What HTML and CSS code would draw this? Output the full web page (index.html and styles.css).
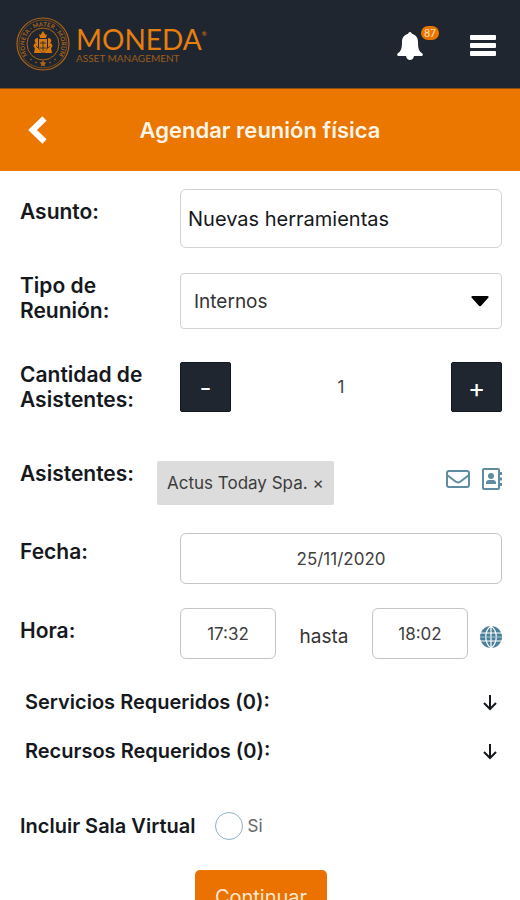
FILE: index.html
```html
<!DOCTYPE html>
<html lang="es">
<head>
<meta charset="utf-8">
<meta name="viewport" content="width=device-width, initial-scale=1">
<title>Agendar reunión física</title>
<link rel="stylesheet" href="styles.css">
</head>
<body>
<header class="topbar">
  <a class="brand" href="#">
    <svg class="seal" viewBox="0 0 54 54" aria-hidden="true">
      <defs><path id="ring" d="M13.500 40.500A18.500 18.500 0 1 1 40.500 40.500"/></defs>
      <g fill="none" stroke="currentColor">
        <circle cx="27" cy="27" r="26" stroke-width="1.200"/>
        <circle cx="27" cy="27" r="24" stroke-width=".6"/>
        <circle cx="27" cy="27" r="16" stroke-width="1"/>
      </g>
      <text class="seal-text"><textPath href="#ring" startOffset="50%">MONETA · MATER · MORUM</textPath></text>
      <g fill="currentColor">
        <path d="M27 43l1 2.200 2.400.3-1.700 1.700.4 2.400-2.100-1.200-2.100 1.200.4-2.400-1.700-1.700 2.400-.3z"/>
        <circle cx="20" cy="45.500" r=".8"/><circle cx="34" cy="45.500" r=".8"/>
        <circle cx="15" cy="42.500" r=".8"/><circle cx="39" cy="42.500" r=".8"/>
      </g>
      <g fill="#d9770f">
        <path d="M23 17l1.500 1L27 14l2.500 4 1.500-1-1 4h-6zM23 22h8v7c0 4-2 6-4 7-2-1-4-3-4-7z"/>
        <path d="M22 21c-4 0-4 4-2 5-3 1-3 4-1 5l-1 5h8l-4-5zM32 21c4 0 4 4 2 5 3 1 3 4 1 5l1 5h-8l4-5z"/>
      </g>
      <path d="M24 26h6M27 24v10M20 29l2 2M34 29l-2 2M24 31h6" stroke="#20262f" stroke-width=".8"/>
    </svg>
    <span class="wordmark"><span class="name">MONEDA<sup>®</sup></span><span class="tagline">ASSET MANAGEMENT</span></span>
  </a>
  <div class="tools">
    <button class="plain bell" type="button" aria-label="Notificaciones">
      <svg width="28" height="30" viewBox="0 0 28 30" aria-hidden="true"><path fill="#fff" d="M14 1c1 0 1.600.7 1.800 1.800C20 3.800 22 7 22 11c0 7 1 9 4.300 11.500.9.700.7 2-.5 2.500H18c-.4 2.400-2 4-4 4s-3.600-1.600-4-4H2.200C1 24.500.8 23.200 1.700 22.500 5 20 6 18 6 11c0-4 2-7.200 6.200-8.200C12.400 1.700 13 1 14 1z"/></svg>
      <span class="count">87</span>
    </button>
    <button class="plain" type="button" aria-label="Menú">
      <svg width="26" height="22" viewBox="0 0 26 22" aria-hidden="true"><g fill="#fff"><rect x="0" y="0" width="26" height="5" rx="1"/><rect x="0" y="8" width="26" height="5" rx="1"/><rect x="0" y="16" width="26" height="5" rx="1"/></g></svg>
    </button>
  </div>
</header>
<div class="titlebar">
  <button class="plain" type="button" aria-label="Volver">
    <svg width="20" height="28" viewBox="0 0 20 28" aria-hidden="true"><path d="M17.500 2.500L5.500 14l12 11.500" fill="none" stroke="#fff" stroke-width="6"/></svg>
  </button>
  <h1>Agendar reunión física</h1>
</div>
<form class="form">
  <div class="row subject">
    <label for="asunto">Asunto:</label>
    <input class="box" id="asunto" type="text" value="Nuevas herramientas">
  </div>
  <div class="row type">
    <label for="tipo">Tipo de Reunión:</label>
    <div class="select">
      <select class="box" id="tipo"><option>Internos</option></select>
      <svg width="18" height="11" viewBox="0 0 18 11" aria-hidden="true"><path d="M1.500 0h15c1 0 1.500 1 .8 1.800l-7 7.700c-.8.900-1.800.9-2.600 0l-7-7.700C0 1 .5 0 1.500 0z"/></svg>
    </div>
  </div>
  <div class="row amount">
    <label for="cantidad">Cantidad de Asistentes:</label>
    <div class="stepper">
      <button type="button" aria-label="Menos">-</button>
      <input id="cantidad" type="text" inputmode="numeric" value="1">
      <button type="button" aria-label="Más">+</button>
    </div>
  </div>
  <div class="row people">
    <span class="label">Asistentes:</span>
    <button class="chip" type="button">Actus Today Spa. ×</button>
    <div class="people-tools">
      <button class="plain" type="button" aria-label="Invitar por correo">
        <svg width="24" height="20" viewBox="0 0 24 20" fill="none" stroke="currentColor" stroke-width="2" aria-hidden="true"><rect x="1" y="2" width="22" height="16" rx="2"/><path d="M1 6l8.500 6.500q2.500 1.800 5 0L23 6"/></svg>
      </button>
      <button class="plain" type="button" aria-label="Contactos">
        <svg width="20" height="24" viewBox="0 0 20 24" aria-hidden="true"><rect x="1" y="2" width="16" height="20" rx="1" fill="none" stroke="currentColor" stroke-width="2"/><g fill="currentColor"><circle cx="9" cy="9" r="3"/><path d="M4 17v-1c0-2 1-3 3-3h4c2 0 3 1 3 3v1zM18 5h2v3h-2zM18 10.500h2v3h-2zM18 16h2v3h-2z"/></g></svg>
      </button>
    </div>
  </div>
  <div class="row date">
    <label for="fecha">Fecha:</label>
    <input class="box center" id="fecha" type="text" value="25/11/2020">
  </div>
  <div class="row time">
    <label for="desde">Hora:</label>
    <div class="range">
      <input class="box center" id="desde" type="text" value="17:32">
      <label class="until" for="hasta">hasta</label>
      <input class="box center" id="hasta" type="text" value="18:02">
      <button class="plain" type="button" aria-label="Zona horaria">
        <svg width="22" height="22" viewBox="0 0 22 22" aria-hidden="true"><circle cx="11" cy="11" r="11" fill="currentColor"/><path d="M0 7h22M0 15h22M11 0v22M11 0C4 5 4 17 11 22M11 0c7 5 7 17 0 22" fill="none" stroke="#fff" stroke-width="1.200"/><path d="M0 11h22" stroke="#a9c4d2"/></svg>
      </button>
    </div>
  </div>
  <div class="expanders">
    <button type="button"><span>Servicios Requeridos (0):</span><svg width="16" height="18" viewBox="0 0 16 18" aria-hidden="true"><path d="M8 1v14M2 9l6 6 6-6"/></svg></button>
    <button type="button"><span>Recursos Requeridos (0):</span><svg width="16" height="18" viewBox="0 0 16 18" aria-hidden="true"><path d="M8 1v14M2 9l6 6 6-6"/></svg></button>
  </div>
  <div class="virtual">
    <span class="label" id="sala">Incluir Sala Virtual</span>
    <label class="option"><input type="radio" name="sala" aria-describedby="sala">Si</label>
  </div>
  <button class="submit" type="button">Continuar</button>
</form>
</body>
</html>
```
FILE: styles.css
```css
* {
  box-sizing: border-box;
}

body {
  margin: 0;
  background: #fff;
  color: #15181d;
  font: 20px/25px Inter, "Liberation Sans", sans-serif;
}

button,
input,
select {
  margin: 0;
  padding: 0;
  font: inherit;
  color: inherit;
}

svg {
  display: block;
  flex: none;
}

.plain {
  border: 0;
  background: none;
}

.topbar {
  display: flex;
  align-items: center;
  justify-content: space-between;
  height: 89px;
  padding: 0 24px 0 16px;
  background: #20262f;
  border-bottom: 1px solid #8f4e10;
}

.brand {
  display: flex;
  align-items: center;
  gap: 6px;
  color: #e67f10;
  text-decoration: none;
}

.seal {
  width: 54px;
  height: 54px;
  color: #ad6418;
}

.seal-text {
  fill: currentColor;
  font: bold 6px Lato, sans-serif;
  text-anchor: middle;
}

.wordmark {
  display: flex;
  flex-direction: column;
  font-family: Lato, sans-serif;
}

.name {
  font-size: 28px;
  line-height: 28px;
}

.name sup {
  font-size: 6px;
  line-height: 6px;
  vertical-align: 14px;
}

.tagline {
  color: #9c5c1b;
  font-size: 10px;
  line-height: 10px;
}

.tools {
  display: flex;
  align-items: center;
  gap: 46px;
  padding-top: 3px;
}

.bell {
  position: relative;
}

.count {
  position: absolute;
  left: 25px;
  top: -5px;
  width: 18px;
  border-radius: 7px;
  background: #e97500;
  color: #ffe3c2;
  font-size: 10px;
  line-height: 14px;
  text-align: center;
}

.titlebar {
  display: grid;
  grid-template-columns: 20px 1fr 20px;
  align-items: center;
  height: 82px;
  padding: 0 27px;
  background: #eb7600;
}

.titlebar h1 {
  margin: 0;
  color: #fff5e8;
  font-size: 22px;
  font-weight: 600;
  text-align: center;
}

.form {
  display: flex;
  flex-direction: column;
  padding: 18px 18px 24px 20px;
}

.row {
  display: grid;
  grid-template-columns: 136px minmax(0, 1fr);
  column-gap: 24px;
  align-items: start;
}

.row > label,
.label {
  font-weight: 600;
}

.row > label,
.row > .label {
  font-size: 21px;
}

.box {
  width: 100%;
  min-width: 0;
  border: 1px solid #d2d2d2;
  border-radius: 6px;
  background: #fff;
}

.center {
  height: 51px;
  border-color: #c4c4c4;
  color: #404040;
  font-size: 17px;
  text-align: center;
}

.subject > label,
.date > label,
.time > label {
  padding-top: 10px;
}

.subject {
  margin-bottom: 25px;
}

.subject .box {
  height: 59px;
  padding: 0 7px;
}

.type {
  margin-bottom: 33px;
}

.select {
  display: grid;
  align-items: center;
}

.select > * {
  grid-area: 1 / 1;
}

.select svg {
  justify-self: end;
  margin-right: 13px;
  pointer-events: none;
}

.select .box {
  height: 56px;
  padding: 0 13px;
  appearance: none;
  border-radius: 4px;
  color: #333;
  font-size: 19px;
}

.amount {
  margin-bottom: 49px;
}

.amount > label {
  margin-right: -16px;
}

.stepper {
  display: flex;
}

.stepper button {
  flex: none;
  width: 51px;
  height: 50px;
  border: 1px solid #111820;
  border-radius: 2px;
  background: #20262f;
  color: #fff;
  font-size: 26px;
}

.stepper input {
  flex: 1;
  min-width: 0;
  border: 0;
  background: none;
  color: #404040;
  font-size: 17px;
  text-align: center;
}

.people {
  grid-template-columns: 136px auto 1fr;
  column-gap: 1px;
  margin-bottom: 28px;
}

.chip {
  height: 44px;
  padding: 0 10px;
  border: 0;
  border-radius: 2px;
  background: #dcdcdc;
  color: #3c3c3c;
  font-size: 17px;
}

.people-tools {
  display: flex;
  align-items: center;
  justify-content: flex-end;
  gap: 12px;
  height: 36px;
  color: #5f8ca0;
}

.date {
  margin-bottom: 24px;
}

.date > label {
  padding-top: 6px;
}

.range {
  display: flex;
  align-items: center;
}

.range .box {
  flex: 0 1 96px;
}

.until {
  flex: 1;
  padding-top: 6px;
  color: #333;
  font-size: 19px;
  text-align: center;
}

.range .plain {
  margin-left: 12px;
  padding-top: 6px;
  color: #4a7f99;
}

.expanders {
  display: grid;
  gap: 24px;
  margin: 31px 4px 0 5px;
}

.expanders button {
  display: flex;
  justify-content: space-between;
  align-items: center;
  border: 0;
  background: none;
  font-weight: 600;
}

.expanders svg {
  fill: none;
  stroke: #15181d;
  stroke-width: 2;
}

.virtual {
  display: flex;
  align-items: center;
  gap: 20px;
  margin-top: 48px;
}

.option {
  display: flex;
  align-items: center;
  gap: 4px;
  color: #666;
  font-size: 17px;
}

.option input {
  width: 28px;
  height: 28px;
  appearance: none;
  border: 1px solid #8fb0c2;
  border-radius: 50%;
}

.submit {
  align-self: center;
  width: 132px;
  height: 54px;
  margin-top: 30px;
  border: 0;
  border-radius: 5px;
  background: #eb7200;
  color: #ffe9d2;
}
```
